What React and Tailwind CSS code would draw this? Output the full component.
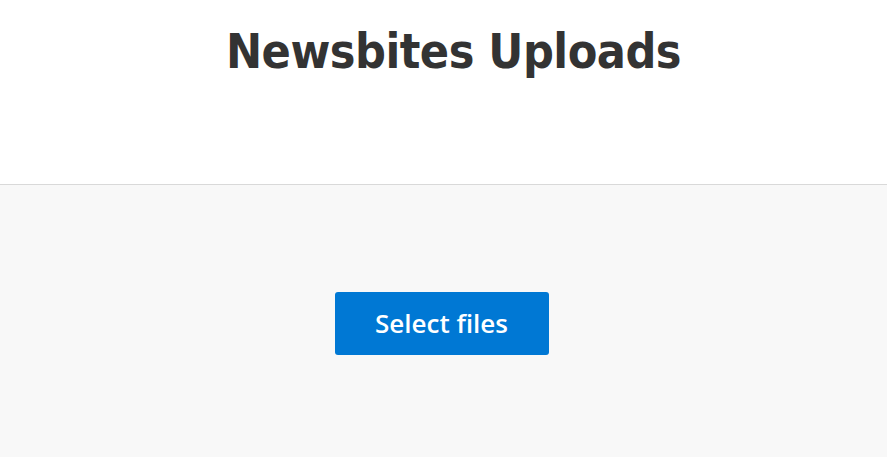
export default function App() {
  return (
    <div className="h-[457px] w-full flex flex-col bg-[#f8f8f8]">
      <header className="h-[185px] shrink-0 bg-white border-b border-[#d9d9d9] flex justify-center pl-[20px]">
        <h1
          className="mt-[23px] text-[48px] leading-[56px] font-bold tracking-[-0.5px] text-[#333333]"
          style={{ fontFamily: '"DejaVu Sans Condensed", "DejaVu Sans", Verdana, sans-serif' }}
        >
          Newsbites Uploads
        </h1>
      </header>
      <main className="flex-1 flex justify-center pr-[4px]">
        <button
          className="mt-[107px] w-[214px] h-[63px] rounded-[3px] bg-[#0078d4] text-white text-[26px] font-semibold"
          style={{ fontFamily: '"Open Sans", sans-serif' }}
        >
          Select files
        </button>
      </main>
    </div>
  );
}
